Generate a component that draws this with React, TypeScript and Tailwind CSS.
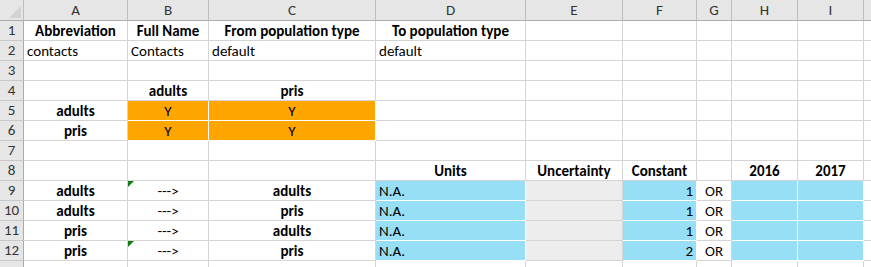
import React from "react";

const COLS = ["A", "B", "C", "D", "E", "F", "G", "H", "I"];
const WIDTHS = "24px 104px 81px 167px 150px 97px 74px 35px 66px 66px 1fr";

type Cell = {
  t?: string;
  b?: boolean;
  align?: "l" | "c" | "r";
  fill?: "orange" | "blue" | "gray";
  flag?: boolean;
};

const ROWS: Record<number, Cell[]> = {
  1: [
    { t: "Abbreviation", b: true },
    { t: "Full Name", b: true },
    { t: "From population type", b: true },
    { t: "To population type", b: true },
  ],
  2: [
    { t: "contacts", align: "l" },
    { t: "Contacts", align: "l" },
    { t: "default", align: "l" },
    { t: "default", align: "l" },
  ],
  4: [{}, { t: "adults", b: true }, { t: "pris", b: true }],
  5: [
    { t: "adults", b: true },
    { t: "Y", fill: "orange" },
    { t: "Y", fill: "orange" },
  ],
  6: [
    { t: "pris", b: true },
    { t: "Y", fill: "orange" },
    { t: "Y", fill: "orange" },
  ],
  8: [
    {},
    {},
    {},
    { t: "Units", b: true },
    { t: "Uncertainty", b: true },
    { t: "Constant", b: true },
    {},
    { t: "2016", b: true },
    { t: "2017", b: true },
  ],
};

const LINKS = [
  ["adults", "adults", "1", true],
  ["adults", "pris", "1", false],
  ["pris", "adults", "1", false],
  ["pris", "pris", "2", true],
] as const;

LINKS.forEach(([from, to, k, flag], i) => {
  ROWS[9 + i] = [
    { t: from, b: true },
    { t: "--->", flag },
    { t: to, b: true },
    { t: "N.A.", align: "l", fill: "blue" },
    { fill: "gray" },
    { t: k, align: "r", fill: "blue" },
    { t: "OR" },
    { fill: "blue" },
    { fill: "blue" },
  ];
});

const FILLS = {
  orange: "bg-[#ffa500] border-white",
  blue: "bg-[#97dff7] border-white",
  gray: "bg-[#ededed] border-[#d4d4d4]",
};

function GridCell({ cell }: { cell: Cell }) {
  const align =
    cell.align === "l" ? "justify-start pl-[3px]" : cell.align === "r" ? "justify-end pr-[3px]" : "justify-center";
  const fill = cell.fill ? FILLS[cell.fill] : "border-[#d4d4d4]";
  return (
    <div
      className={`relative flex items-end h-5 border-r border-b text-[15px] leading-[18px] text-black whitespace-nowrap ${align} ${fill} ${cell.b ? "font-bold" : ""}`}
    >
      {cell.flag && (
        <span className="absolute left-0 top-0 w-0 h-0 border-t-[6px] border-r-[6px] border-t-[#117a11] border-r-transparent" />
      )}
      {cell.t}
    </div>
  );
}

export default function App() {
  return (
    <div
      className="w-[871px] h-[267px] overflow-hidden bg-white"
      style={{ fontFamily: "Carlito, Lato, 'Open Sans', sans-serif" }}
    >
      <div className="grid" style={{ gridTemplateColumns: WIDTHS }}>
        <div className="relative h-[21px] bg-[#e6e6e6] border-r border-b border-r-[#bdbdbd] border-b-[#ababab]">
          <svg className="absolute right-[2px] bottom-[2px]" width="12" height="12" viewBox="0 0 12 12">
            <path d="M12 0 L12 12 L0 12 Z" fill="#d2d2d2" />
          </svg>
        </div>
        {COLS.map((c) => (
          <div
            key={c}
            className="h-[21px] bg-[#e6e6e6] border-r border-b border-r-[#bdbdbd] border-b-[#ababab] flex items-center justify-center text-[15px] text-[#333]"
          >
            {c}
          </div>
        ))}
        <div className="h-[21px] bg-[#e6e6e6] border-b border-b-[#ababab]" />

        {Array.from({ length: 13 }, (_, i) => i + 1).map((r) => {
          const cells = ROWS[r] || [];
          return (
            <React.Fragment key={r}>
              <div className="h-5 bg-[#e6e6e6] border-r border-b border-r-[#ababab] border-b-[#c8c8c8] flex items-center justify-center text-[15px] text-[#333]">
                {r < 13 ? r : ""}
              </div>
              {COLS.map((c, ci) => (
                <GridCell key={c} cell={cells[ci] || {}} />
              ))}
              <div className="h-5 border-b border-[#d4d4d4]" />
            </React.Fragment>
          );
        })}
      </div>
    </div>
  );
}
